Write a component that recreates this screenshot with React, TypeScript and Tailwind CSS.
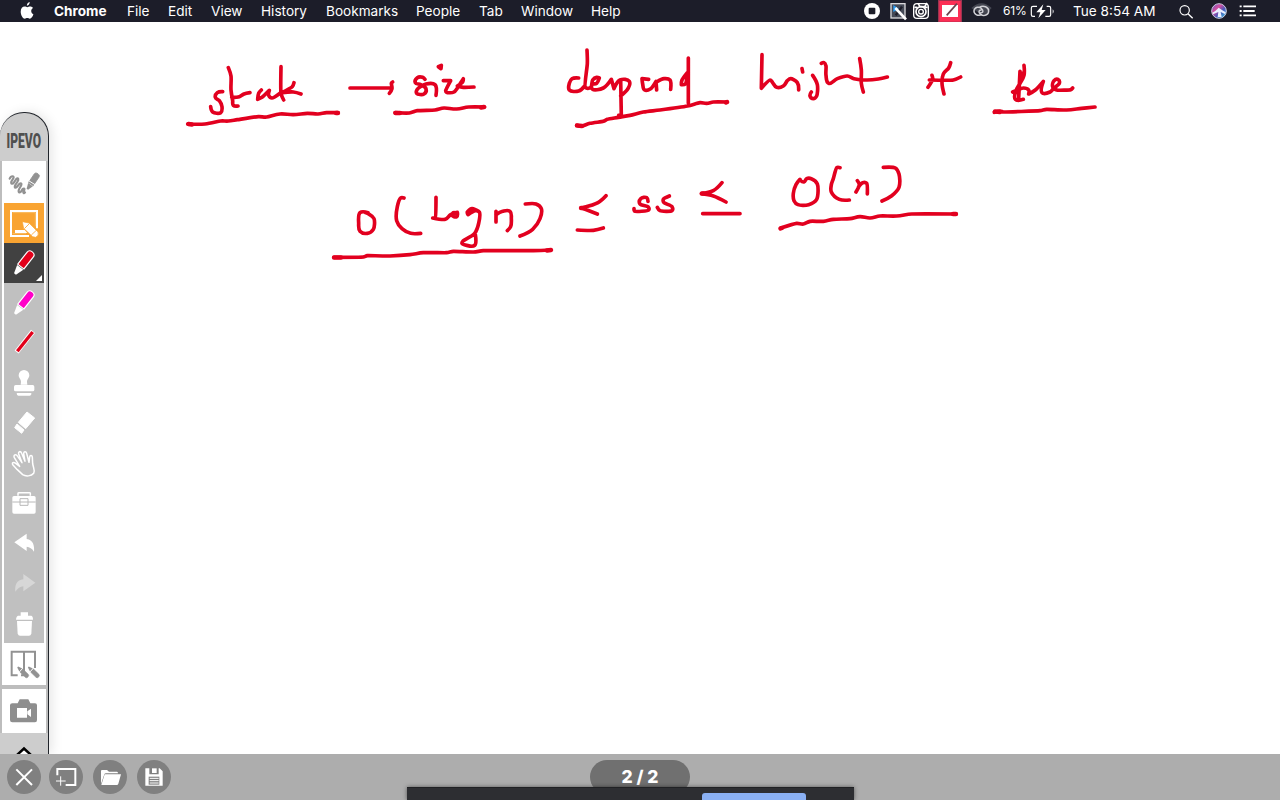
import type { ReactNode } from 'react';

const menuItems = [
  { label: 'Chrome', cls: 'w-[73px] font-bold' },
  { label: 'File', cls: 'w-[41px]' },
  { label: 'Edit', cls: 'w-[43px]' },
  { label: 'View', cls: 'w-[50px]' },
  { label: 'History', cls: 'w-[65px]' },
  { label: 'Bookmarks', cls: 'w-[90px]' },
  { label: 'People', cls: 'w-[63px]' },
  { label: 'Tab', cls: 'w-[42px]' },
  { label: 'Window', cls: 'w-[70px]' },
  { label: 'Help', cls: 'w-[40px]' },
];

function Pen({ x, y, fill, tip = 'white', outline = 'white', scale = 1, angle = 38, wide = 1 }: { x: number; y: number; fill: string; tip?: string; outline?: string; scale?: number; angle?: number; wide?: number }) {
  return (
    <g transform={`translate(${x} ${y}) rotate(${angle}) scale(${scale * wide} ${scale})`}>
      <path d="M-10 -29V-76Q-10 -86 0 -86T10 -76V-29Z" fill={fill} stroke={outline} strokeWidth="3" />
      <path d="M-10 -26H10L3 0H-3Z" fill={tip} />
    </g>
  );
}

function Cell({ children, className = '' }: { children: ReactNode; className?: string }) {
  return (
    <div className={`h-10 w-10 shrink-0 ${className}`}>
      <svg className="block h-10 w-10" viewBox="0 0 120 120" fill="none">{children}</svg>
    </div>
  );
}

function RoundButton({ children, className = '' }: { children: ReactNode; className?: string }) {
  return (
    <button className={`h-[34px] w-[34px] shrink-0 rounded-full bg-[#808080] ${className}`}>
      <svg className="block h-[34px] w-[34px]" viewBox="0 0 102 102" fill="none">{children}</svg>
    </button>
  );
}

function MenuBar() {
  return (
    <header className="flex h-[22px] shrink-0 items-center bg-[#1c1d29] text-[13.6px] leading-[22px] text-white">
      <svg className="ml-5 mr-5 h-[18px] w-[14px] shrink-0" viewBox="0 0 14 18" fill="white">
        <path d="M9.700 0C9.800 1.800 8.600 3.500 6.900 3.700C6.700 2 8.200 .3 9.700 0ZM13 6C11.500 7 11 8.300 11.300 9.700C11.500 10.900 12.200 11.700 13.400 12.200C12.700 14.500 11.300 16.700 9.800 16.700C8.800 16.700 8.400 16.100 7.300 16.100C6.200 16.100 5.700 16.700 4.800 16.700C2.900 16.700 .7 13.100 .7 9.700C.7 6.500 2.500 4.600 4.700 4.600C5.800 4.600 6.500 5.200 7.300 5.200C8.200 5.200 9 4.500 10.200 4.500C11.400 4.500 12.300 5 13 6Z" />
      </svg>
      <nav className="flex">
        {menuItems.map((m) => <span key={m.label} className={m.cls}>{m.label}</span>)}
      </nav>
      <div className="ml-auto flex w-[420px] shrink-0 items-center">
        <svg className="h-[22px] w-[23px] shrink-0" viewBox="30 0 69 66">
          <circle cx="66" cy="33" r="24" fill="white" /><rect x="56" y="23" width="20" height="20" rx="3" fill="#1c1d29" />
        </svg>
        <svg className="h-[22px] w-[28px] shrink-0" viewBox="99 0 84 66" fill="none">
          <rect x="123" y="11" width="42" height="43" fill="#444956" stroke="#d8d8dc" strokeWidth="4" />
          <path d="M130 15V36L146 26Z" fill="#2a9df4" /><path d="M137 46L156 20" stroke="#1c1d29" strokeWidth="7" />
          <path d="M136 24L168 58" stroke="white" strokeWidth="8" />
        </svg>
        <svg className="h-[22px] w-[26px] shrink-0" viewBox="183 0 78 66" fill="none" stroke="white">
          <rect x="191" y="11" width="44" height="44" rx="10" strokeWidth="4" />
          <circle cx="213" cy="35" r="15" strokeWidth="5" /><circle cx="213" cy="35" r="7" strokeWidth="4" />
          <path d="M204 10L210 20H224L231 9M193 22H202M224 22H233" strokeWidth="5" />
        </svg>
        <svg className="h-[22px] w-[26px] shrink-0" viewBox="261 0 78 66">
          <rect x="264" y="0" width="72" height="66" fill="#9d3350" /><rect x="268" y="3" width="64" height="62" fill="#fb2f55" />
          <rect x="276" y="15" width="48" height="36" fill="white" /><path d="M290 46L321 11" stroke="#69434d" strokeWidth="5" />
        </svg>
        <svg className="h-[22px] w-[40px] shrink-0" viewBox="339 0 120 66" fill="none">
          <path d="M364 24Q394 -4 425 24L407 42L386 38Z" fill="#454752" />
          <path d="M396 44C382 50 371 41 372 32C374 21 388 18 395 26C402 33 399 40 390 39M388 22C401 14 416 22 416 33C416 45 402 50 392 43C384 37 386 29 395 30" stroke="#d0d0d5" strokeWidth="4.500" />
        </svg>
        <span className="w-[27px] shrink-0 text-[12px] tracking-[-0.200px]">61%</span>
        <svg className="h-[22px] w-[43px] shrink-0" viewBox="540 0 129 66" fill="none">
          <path d="M561 19H549Q544 19 544 24V44Q544 49 549 49H555M590 19H597Q602 19 602 24V44Q602 49 597 49H586" stroke="white" strokeWidth="3.500" />
          <path d="M608 28Q614 34 608 41Z" fill="white" /><path d="M580 13L559 37H571L565 55L587 30H575Z" fill="white" />
        </svg>
        <span className="w-[105px] shrink-0 whitespace-nowrap text-[13.600px]">Tue 8:54 AM</span>
        <svg className="h-[22px] w-[28px] shrink-0" viewBox="984 0 84 66" fill="none" stroke="white" strokeWidth="3.500">
          <circle cx="1004" cy="31" r="14" /><path d="M1014 41L1028 55" strokeWidth="4" />
        </svg>
        <svg className="h-[22px] w-[26px] shrink-0" viewBox="1068 0 78 66">
          <defs><linearGradient id="siri" x1="0" y1="0" x2="1" y2="1"><stop stopColor="#5b62c9" /><stop offset=".35" stopColor="#d54c9d" /><stop offset=".6" stopColor="#4a58b8" /><stop offset="1" stopColor="#35c9df" /></linearGradient></defs>
          <circle cx="1107" cy="33" r="22" fill="url(#siri)" stroke="#c9c9df" strokeWidth="3" />
          <path d="M1087 38Q1096 34 1106 23Q1116 30 1127 37L1125 42L1112 36L1115 51H1103L1105 36L1089 43Z" fill="#e9efff" />
        </svg>
        <svg className="h-[22px] w-[24px] shrink-0" viewBox="1143 0 72 66" stroke="white" strokeWidth="5.500">
          <path d="M1166 19H1172M1166 33H1172M1166 46H1172M1177 19H1215M1177 33H1211M1177 46H1218" />
        </svg>
      </div>
    </header>
  );
}

function Toolbar() {
  return (
    <aside className="mt-[90px] flex w-[49px] shrink-0 flex-col items-start rounded-t-[24px] border-r-[1.500px] border-t border-[#20242a] bg-[#cdcdcd] shadow-[3px_0_12px_rgba(0,0,0,0.1)]">
      <svg className="block h-12 w-12 shrink-0" viewBox="0 0 48 48">
        <text x="6.500" y="35" textLength="34.500" lengthAdjust="spacingAndGlyphs" fontFamily="Roboto, sans-serif" fontWeight="900" fontSize="19.500" fill="#50504f">IPEVO</text>
      </svg>
      <div className="flex w-[48px] shrink-0 flex-col bg-[#bdbdbd] pl-[2px] pr-[2px]">
        <div className="flex w-11 flex-col items-center bg-white">
          <svg className="block h-[42px] w-11 shrink-0" viewBox="0 0 132 126" fill="none">
            <path d="M23 53C27 43 38 44 34 52L28 62C26 70 32 70 36 64L43 54C48 49 52 54 46 63L40 72C35 82 42 82 47 75L53 68C59 64 60 70 56 76L51 85C47 96 54 97 59 89L62 84C68 80 69 85 65 91C62 96 66 98 69 94" stroke="#929292" strokeWidth="6.500" strokeLinecap="round" />
            <Pen x={76} y={85} fill="#929292" tip="#929292" outline="#929292" scale={0.66} angle={34} wide={1.3} />
            <path d="M80 59L99 71" stroke="white" strokeWidth="3" />
          </svg>
          <Cell className="bg-[#f9a432]">
            <path d="M75 99H21V24H99V76" stroke="white" strokeWidth="6" />
            <path d="M26 29H94V70M26 92H66" stroke="#fccb82" strokeWidth="2" />
            <path d="M33 81H62L70 90H33Z" fill="white" />
            <path d="M55 56L75 60L102 87Q106 98 95 103L86 101L59 76Z" fill="white" stroke="#f9a432" strokeWidth="2" />
            <path d="M61 77L76 62M82 96L98 81" stroke="#f9a432" strokeWidth="2.500" />
          </Cell>
          <Cell className="bg-[#414141]"><Pen x={33} y={93} fill="#e2001a" scale={0.98} wide={1.2} /><path d="M114 96V114H96Z" fill="white" /></Cell>
          <div className="w-10 bg-[#c0c0c0]">
            <Cell><Pen x={33} y={93} fill="#ff00c8" scale={0.98} wide={1.2} /></Cell>
            <Cell><path d="M38 87L87 25" stroke="white" strokeWidth="15" /><path d="M40 85L86 27" stroke="#e2001a" strokeWidth="10" /></Cell>
            <Cell><g fill="white"><path d="M44 37A16 16 0 1 1 76 37C76 46 69 47 69 57L70 65H50L51 57C51 47 44 46 44 37Z" /><rect x="30" y="66" width="61" height="19" rx="5" /><path d="M38 90H82V94Q81 98 77 98H43Q38 98 38 90Z" /></g></Cell>
            <Cell><g fill="white" stroke="white" strokeWidth="3" strokeLinejoin="round"><path d="M69 27L92 45L65 77L43 58Z" /><path d="M39 63L60 81L53 91L32 74Z" /></g></Cell>
            <Cell><path d="M56 95L40 80L27 66C22 59 29 56 35 61L47 70L31 44C27 35 36 32 41 40L54 59L44 33C42 25 50 23 53 31L63 55L59 32C59 25 66 24 68 31L75 58L77 42C78 35 85 36 85 43L86 62C88 75 94 82 89 91C82 100 65 101 56 95Z" stroke="white" strokeWidth="4.500" strokeLinejoin="round" /></Cell>
            <Cell><path d="M42 38V31Q42 29 45 29H76Q79 29 79 31V38" stroke="white" strokeWidth="4.500" /><rect x="25" y="39" width="70" height="53" rx="5" fill="white" /><path d="M25 57H48M72 57H95M48 47H72V67H48ZM48 57H72" stroke="#b8b8b8" strokeWidth="3" /></Cell>
            <Cell><path d="M31 58L68 32V48C87 50 92 68 90 86C84 76 77 72 68 71V84Z" fill="white" /></Cell>
            <Cell><path d="M94 59L58 33V49C38 51 32 66 34 86C40 76 49 71 58 70V85Z" fill="#d7d7d7" /></Cell>
            <Cell><g fill="white"><path d="M50 28H72V38H82Q87 39 87 50H36Q37 39 42 38H50Z" /><path d="M39 54H84L82 92Q80 98 75 98H48Q43 98 41 92Z" /></g></Cell>
          </div>
          <svg className="block h-[42px] w-11 shrink-0" viewBox="0 0 132 126" fill="none">
            <path d="M47 97H29V26H99V75M66 26V97M57 97H67" stroke="#929292" strokeWidth="6" />
            <Pen x={47} y={72} fill="#929292" tip="#929292" outline="#929292" scale={0.5} angle={134} wide={1.25} />
            <Pen x={79} y={72} fill="#929292" tip="#929292" outline="#929292" scale={0.5} angle={134} wide={1.25} />
            <path d="M51 88L62 76M83 88L94 76" stroke="white" strokeWidth="2.500" />
          </svg>
        </div>
        <div className="mt-1 h-11 w-11 bg-white">
          <svg className="block h-11 w-11" viewBox="0 0 132 132">
            <path d="M31 43H47L53 31H79L85 43H99Q105 43 105 49V93Q105 100 99 100H31Q24 100 24 93V49Q24 43 31 43Z" fill="#8e8e8e" />
            <path d="M45 57H75V86H45ZM76 67L87 59V84L76 76Z" fill="white" />
          </svg>
        </div>
      </div>
      <svg className="block h-[21px] w-12 shrink-0" viewBox="0 0 48 21"><path d="M17 22L24 15.500L31 22" fill="white" stroke="black" strokeWidth="2.500" /></svg>
    </aside>
  );
}

type Point = [number, number];

// Turns a pen trace into flowing curves; sharp reversals stay as corners.
function smooth(trace: string): string {
  return trace.split('M').filter(Boolean).map((part) => {
    const closed = part.endsWith('Z');
    const pts: Point[] = [];
    for (const [, cmd, args] of ('L' + part).matchAll(/([LHV])([^LHVZ]*)/g)) {
      const n = args.trim().split(/\s+/).map(Number);
      const last = pts[pts.length - 1];
      if (cmd === 'H') pts.push([n[0], last[1]]);
      else if (cmd === 'V') pts.push([last[0], n[0]]);
      else for (let i = 0; i < n.length; i += 2) pts.push([n[i], n[i + 1]]);
    }
    if (closed) pts.push(pts[0]);
    const tangents = pts.map((p, i): Point => {
      const a = pts[i - 1];
      const b = pts[i + 1];
      if (!a || !b) return [0, 0];
      const u: Point = [p[0] - a[0], p[1] - a[1]];
      const v: Point = [b[0] - p[0], b[1] - p[1]];
      const lu = Math.hypot(...u) || 1;
      const lv = Math.hypot(...v) || 1;
      if ((u[0] * v[0] + u[1] * v[1]) / (lu * lv) < -0.2) return [0, 0];
      const dir: Point = [u[0] / lu + v[0] / lv, u[1] / lu + v[1] / lv];
      const ld = Math.hypot(...dir) || 1;
      const size = Math.min(lu, lv) * 0.36;
      return [(dir[0] / ld) * size, (dir[1] / ld) * size];
    });
    return 'M' + pts.map((p, i) => {
      if (i === 0) return p.join(' ');
      const a = pts[i - 1];
      const ta = tangents[i - 1];
      const tb = tangents[i];
      return `C${a[0] + ta[0]} ${a[1] + ta[1]} ${p[0] - tb[0]} ${p[1] - tb[1]} ${p[0]} ${p[1]}`;
    }).join('');
  }).join('');
}

const ink = [
  { at: 'translate(180 40) scale(.33333)', d: 'M128 155L112 158L106 172L118 182L126 200L122 218L98 216L92 200M145 83L153 108L153 150L158 182L160 196L174 198M155 172L178 170L192 162L210 158M244 150L236 160L233 178L246 172L268 151L266 166L276 174L302 158M303 80V160L311 180M342 128L337 140L306 158L340 156L363 162M23 252L75 252L122 243L145 243L172 239L235 230L260 231L300 222L340 224L382 220L414 222L440 218L474 218' },
  { at: 'translate(180 40) scale(.33333)', d: 'M510 144L632 144M638 126L634 130L636 146L628 160M775 80L784 76L783 86ZM735 118L728 112L712 113L706 128L722 134L738 146L732 162L710 160L712 148L738 132L765 134L768 166M790 122L812 122L797 152L800 157L822 156L846 122L850 116L848 126L832 138L850 142L882 141M645 218L688 219L712 212L765 210L792 204L830 207L866 201L914 201' },
  { at: 'translate(550 40) scale(.33333)', d: 'M86 114L66 116L58 130L58 150L86 153L104 138M111 30L112 70L106 142L122 142L128 120L140 112L148 114L140 130L126 134L128 148L160 144L184 118L192 146L210 120L238 124L234 146L212 168M212 120L214 228L206 226M296 118L276 116L278 132L284 150L302 146L318 124L320 150M320 126L342 116L360 120L362 148M412 98L396 120L394 134L406 132L412 100M415 54V190M80 256L96 258L120 250L160 244L172 238L205 232L240 226L280 216L330 210L412 198L450 188L470 190L490 186L532 186' },
  { at: 'translate(550 40) scale(.33333)', d: 'M636 44L634 145L660 120L668 128L680 142L700 138L712 122L722 116L742 128L746 150M756 86L758 96M788 106L802 134L800 168L790 176L780 168L784 156M814 70L822 68L828 78L828 106L836 130L862 116L892 108L912 116L950 120L985 117L1012 111M929 56L934 90L934 130L940 156' },
  { at: 'translate(890 40) scale(.33333)', d: 'M126 106L128 118L114 142M118 120L190 120L212 111M182 68L176 84L160 102L156 130L162 162M402 76L402 106L390 130L378 152L376 178L400 178M390 94L386 176M396 100L384 150M368 156L400 144L416 150L416 162L436 150L460 124L456 158L480 156L490 146L508 130L504 118L492 122L488 140L500 150L542 149L548 144M313 217L330 213L340 216L450 212L470 208L530 210L575 205L615 201' },
  { at: 'translate(320 180) scale(.33333)', d: 'M144 98L120 98L116 130L120 154L142 160L160 148L162 116L146 102L134 97M252 54L242 54L232 80L230 122L246 146L272 160L302 160M348 52L346 112L338 114L376 118L392 104L412 97L410 110L396 106L400 98M478 96L456 86L442 96L444 104L466 92L478 96L476 130L464 160L430 182L426 190L440 196L464 196L466 164M528 94L528 126M528 104L548 94L570 94L574 116L572 140L562 152M616 72L648 72L664 86L660 116L638 148L600 168M858 47L834 68L786 84L832 102M772 150L820 151L850 144M42 232L130 231L142 227L210 228L270 224L310 218L380 218L400 214L460 216L490 212L640 212L692 210' },
  { at: 'translate(620 150) scale(.33333)', d: 'M84 154L80 143L62 146L60 162L84 170L86 180L44 184L42 176M148 138L130 148L132 158L156 170L156 182L120 182L112 172M306 98L280 122L244 131L280 138L318 156M248 191H360M540 88L528 104L520 130L522 152L534 164L566 164L590 148L592 102L574 86L560 86L552 96L540 90M660 53H650L640 86L634 104L634 126L658 148L688 150M712 92L718 104L708 126M716 110L728 98L740 100L742 132M790 52L826 54L837 72L837 112L814 138L786 153M482 234L530 220L550 222L570 214L610 214L640 208L690 206L720 200L750 204L780 198L830 198L875 192L1008 192' },
];

const inkEnds = 'M188.500 124L192 124.500M336 113L338 113M395.500 113L400 113M481 107.500L484 107M577 125.500L582 126M726 102.500L727 102M995 111.500L1000 112M334 257.500L341 257.500M547 250.500L551 250M780.500 228.500L782 228M953 214L956 214M702 193.500L704 193.500M581 208L585 208M455 213L456 213.500';

export default function App() {
  return (
    <div className="flex h-screen w-full flex-col overflow-hidden bg-white font-[Inter,'Liberation_Sans',sans-serif]">
      <MenuBar />
      <main className="flex min-h-0 flex-1">
        <Toolbar />
        <svg className="block h-[732px] w-[1231px] shrink-0" viewBox="49 22 1231 732" fill="none" stroke="#e2001f" strokeLinecap="round" strokeLinejoin="round">
          {ink.map((s, i) => <path key={i} d={smooth(s.d)} transform={s.at} strokeWidth="11" />)}
          <path d={inkEnds} strokeWidth="4.400" />
        </svg>
      </main>
      <footer className="relative flex h-[46px] shrink-0 items-start overflow-hidden bg-[#adadad] pl-[7px] pt-[6px]">
        <RoundButton><path d="M28 28L75 75M75 28L28 75" stroke="white" strokeWidth="6" /></RoundButton>
        <RoundButton className="ml-2"><path d="M25 46V27H79V75H50" stroke="white" strokeWidth="6" /><path d="M35 49V77M21 63H50" stroke="white" strokeWidth="3" /></RoundButton>
        <RoundButton className="ml-2.5"><path d="M24 72V33Q24 30 27 30H42L48 35H72Q75 35 75 40H39Q35 40 34 43Z" fill="white" /><path d="M35 43H84L76 71Q75 75 71 75H25Z" fill="white" /></RoundButton>
        <RoundButton className="ml-2.5"><path d="M25 25H37V43H65V25H68L77 34V77H25Z" fill="white" /><path d="M45 25H59V39H45Z" fill="white" /><path d="M35 50H67V74H35Z" fill="#808080" /><path d="M38 55H65M38 62H65M38 69H65" stroke="white" strokeWidth="3" /></RoundButton>
        <div className="ml-[419px] flex h-[34px] w-[100px] shrink-0 items-center justify-center rounded-full bg-[#707070] text-[17.500px] font-extrabold text-white">2 / 2</div>
        <div className="absolute bottom-0 left-[407px] flex h-[13px] w-[447px] border-t border-[#202124] bg-[#2d2e32] pl-[295px] pt-[5px] shadow-[0_0_4px_rgba(0,0,0,0.5)]">
          <div className="h-[8px] w-[104px] rounded-t-[3px] bg-[#8ab0f3]" />
        </div>
      </footer>
    </div>
  );
}
